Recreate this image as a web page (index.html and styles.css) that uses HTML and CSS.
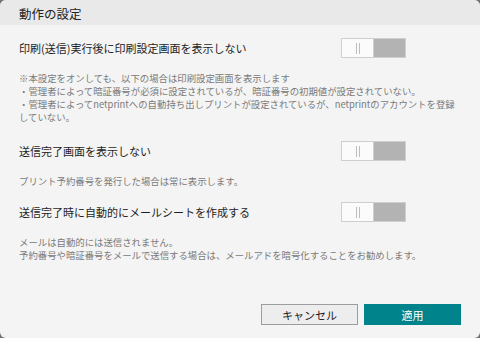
FILE: index.html
```html
<!DOCTYPE html>
<html>

<head>
    <meta charset="UTF-8">
    <meta name="viewport" content="width=device-width, initial-scale=1.0">
    <title>動作の設定</title>
    <link rel="stylesheet" href="styles.css">
</head>

<body>
    <div class="dialog">
        <div class="title">動作の設定</div>

        <div class="content">
            <section class="setting first">
                <div class="setting-head">
                    <span class="label">印刷(送信)実行後に印刷設定画面を表示しない</span>
                    <span class="toggle"><span class="knob"></span><span class="track"></span></span>
                </div>
                <p class="note">※本設定をオンしても、以下の場合は印刷設定画面を表示します<br>
                    ・管理者によって暗証番号が必須に設定されているが、暗証番号の初期値が設定されていない。<br>
                    ・管理者によってnetprintへの自動持ち出しプリントが設定されているが、netprintのアカウントを登録していない。</p>
            </section>

            <section class="setting second">
                <div class="setting-head">
                    <span class="label">送信完了画面を表示しない</span>
                    <span class="toggle"><span class="knob"></span><span class="track"></span></span>
                </div>
                <p class="note">プリント予約番号を発行した場合は常に表示します。</p>
            </section>

            <section class="setting third">
                <div class="setting-head">
                    <span class="label">送信完了時に自動的にメールシートを作成する</span>
                    <span class="toggle"><span class="knob"></span><span class="track"></span></span>
                </div>
                <p class="note">メールは自動的には送信されません。<br>
                    予約番号や暗証番号をメールで送信する場合は、メールアドを暗号化することをお勧めします。</p>
            </section>
        </div>

        <div class="actions">
            <button class="btn cancel">キャンセル</button>
            <button class="btn apply">適用</button>
        </div>
    </div>
</body>

</html>
```

FILE: styles.css
```css
body {
    margin: 0;
    padding: 0;
    background-color: #6f7475;
    font-family: "Noto Sans CJK JP", "Noto Sans", sans-serif;
    color: #222;
}

.dialog {
    width: 480px;
    height: 338px;
    display: flex;
    flex-direction: column;
    background-color: #f4f4f4;
    border-radius: 6px;
    overflow: hidden;
}

.title {
    height: 25px;
    line-height: 27px;
    padding-left: 19px;
    font-size: 12.5px;
    background-color: #e9e9e9;
    color: #222;
}

.content {
    padding: 13px 19px 0 19px;
}

.setting-head {
    display: grid;
    grid-template-columns: 322px 65px;
    align-items: center;
    height: 20px;
}

.label {
    font-size: 11px;
    line-height: 20px;
    color: #1e1e1e;
}

.toggle {
    display: flex;
    width: 65px;
    height: 20px;
    box-sizing: border-box;
    border: 1px solid #cfcfcf;
}

.knob {
    flex: 1;
    background-color: #fbfbfb;
    border-right: 1px solid #cfcfcf;
    position: relative;
}

.knob::before {
    content: "";
    position: absolute;
    left: 14px;
    top: 4px;
    width: 1px;
    height: 11px;
    background-color: #bdbdbd;
    box-shadow: 3px 0 0 #bdbdbd;
}

.track {
    flex: 1;
    background-color: #b3b3b3;
}

.note {
    margin: 14px 0 0 0;
    width: 441px;
    font-size: 9.4px;
    line-height: 13px;
    color: #7a7a7a;
}

.second {
    margin-top: 17px;
}

.third {
    margin-top: 14px;
}

.actions {
    margin-top: auto;
    display: flex;
    justify-content: flex-end;
    gap: 6px;
    padding: 0 19px 13px 0;
}

.btn {
    width: 97px;
    height: 21px;
    padding: 0;
    font-family: "Noto Sans CJK JP", "Noto Sans", sans-serif;
    font-size: 11px;
    border-radius: 0;
    cursor: pointer;
}

.cancel {
    background-color: #ededed;
    border: 1px solid #9d9d9d;
    color: #222;
}

.apply {
    background-color: #00838a;
    border: 1px solid #00838a;
    color: #fff;
}
```
